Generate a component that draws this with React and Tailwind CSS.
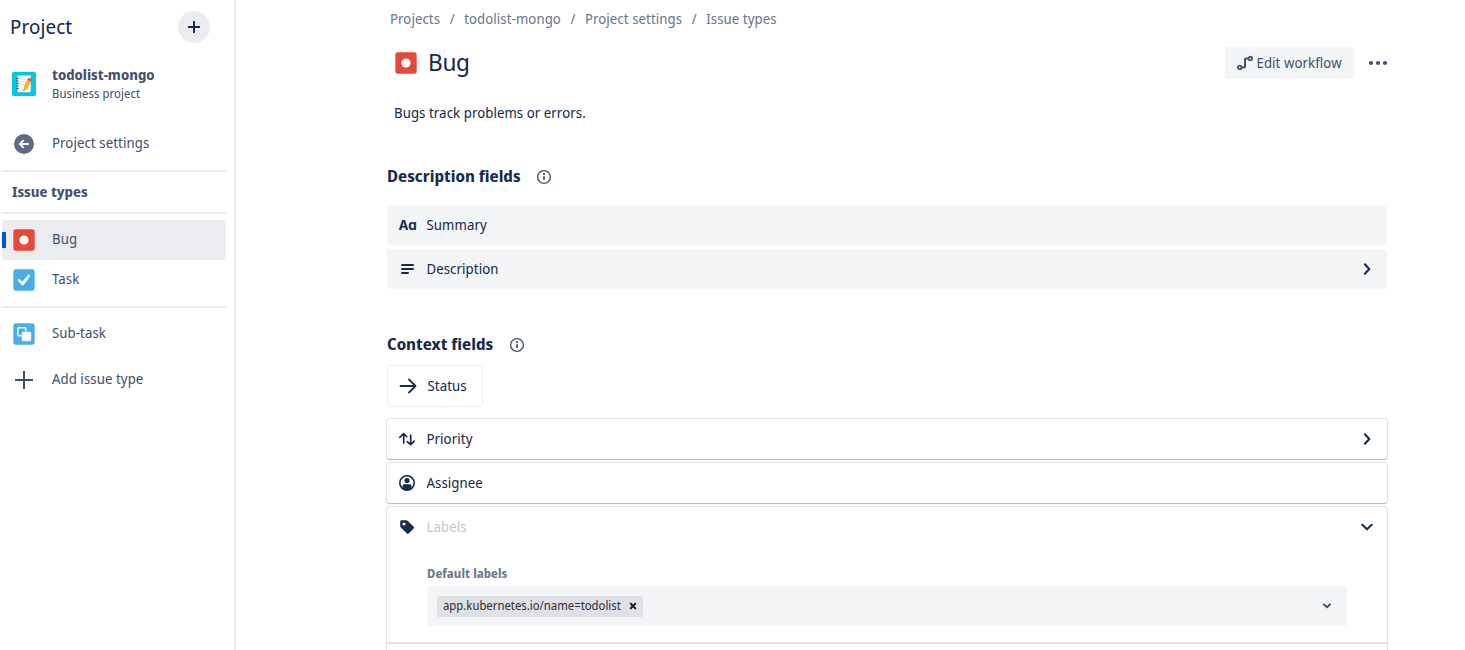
import React from 'react';

function BugIcon() {
  return (
    <svg width="24" height="24" viewBox="0 0 24 24" className="shrink-0">
      <rect x="1.3" y="1.3" width="21.4" height="21.4" rx="2.6" fill="#E5493A" />
      <circle cx="12" cy="12" r="4.6" fill="#fff" />
    </svg>
  );
}

function TaskIcon() {
  return (
    <svg width="24" height="24" viewBox="0 0 24 24" className="shrink-0">
      <rect x="1.3" y="1.3" width="21.4" height="21.4" rx="2.6" fill="#4BADE8" />
      <path d="M7.4 12.6l3.2 3.3 6.2-8" fill="none" stroke="#fff" strokeWidth="2.8" strokeLinecap="round" strokeLinejoin="round" />
    </svg>
  );
}

function SubtaskIcon() {
  return (
    <svg width="24" height="24" viewBox="0 0 24 24" className="shrink-0">
      <rect x="1.3" y="1.3" width="21.4" height="21.4" rx="2.6" fill="#4BADE8" />
      <rect x="5.8" y="5.8" width="8" height="8" rx="1" fill="none" stroke="#fff" strokeWidth="1.5" />
      <rect x="9.6" y="9.6" width="9.8" height="9.8" rx="1.6" fill="#fff" stroke="#4BADE8" strokeWidth="0.6" />
    </svg>
  );
}

function NoteAvatar() {
  return (
    <svg width="24" height="24" viewBox="0 0 24 24" className="shrink-0">
      <rect width="24" height="24" rx="2" fill="#00C7E6" />
      <path d="M5.5 3.6h13.3v15.6q0 1-1 1H6.5q-1 0-1-1z" fill="#F7F9FC" />
      <path d="M6 3.9h11" stroke="#C9D3DC" strokeWidth="0.8" />
      <path d="M8 7.4h6M8 10h5M8 12.6h4" stroke="#D5DEE6" strokeWidth="0.8" />
      <path d="M4 6.5h2.6M4 9h2.6M4 11.5h2.6M4 14h2.6M4 16.5h2.6" stroke="#31527A" strokeWidth="1" />
      <path d="M14.6 8.2l4.2 1.9-3.2 6.6-4 2.2.2-4.2z" fill="#FBB829" />
      <path d="M17.2 9.4l-4.2 7.8" stroke="#F79A22" strokeWidth="0.8" />
      <path d="M14.8 7.8l1.2-1.4q2-.8 4 .5l-1.1 3z" fill="#EF5350" />
      <path d="M11.5 19.1l.1-1.4 1.2.7z" fill="#4A4040" />
    </svg>
  );
}

function InfoIcon() {
  return (
    <svg width="16" height="16" viewBox="0 0 16 16" className="mt-0.5 shrink-0">
      <circle cx="8" cy="8" r="6.4" fill="none" stroke="#44546F" strokeWidth="1.4" />
      <path d="M8 7.2v3.8" stroke="#44546F" strokeWidth="1.8" />
      <circle cx="8" cy="5.1" r="1.1" fill="#44546F" />
    </svg>
  );
}

function Chevron({ down }) {
  return (
    <svg width="16" height="16" viewBox="0 0 16 16" className="shrink-0">
      <path
        d={down ? 'M3.3 5.8L8 10.2l4.7-4.4' : 'M5.9 3.3L10.3 8l-4.4 4.7'}
        fill="none"
        stroke="#172B4D"
        strokeWidth="2.1"
        strokeLinecap="round"
        strokeLinejoin="round"
      />
    </svg>
  );
}

function Label({ children, className = '' }) {
  return <span className={`whitespace-nowrap ${className}`}>{children}</span>;
}

function Sidebar() {
  return (
    <aside className="flex h-full w-[236px] shrink-0 flex-col border-r-2 border-[#EBECF0] pl-0.5 pr-2 text-[#42526E]">
      <header className="mt-[11px] flex h-8 items-center justify-between pl-2 pr-4">
        <Label className="text-[20px] text-[#172B4D]">Project</Label>
        <button className="flex size-8 items-center justify-center rounded-full bg-[#EBECF0]">
          <svg width="12" height="12" viewBox="0 0 12 12">
            <path d="M6 .8v10.4M.8 6h10.4" stroke="#172B4D" strokeWidth="2" strokeLinecap="round" />
          </svg>
        </button>
      </header>
      <div className="mt-[21px] flex h-10 items-center gap-4 pl-2.5">
        <NoteAvatar />
        <div className="-mt-0.5 flex flex-col">
          <Label className="text-[14px] leading-[20px] font-bold tracking-normal">todolist-mongo</Label>
          <Label className="text-[12px] leading-[17px]">Business project</Label>
        </div>
      </div>
      <div className="mt-5 flex h-10 items-center gap-4 pl-2.5">
        <svg width="24" height="24" viewBox="0 0 24 24">
          <circle cx="12" cy="12" r="10" fill="#5E6C84" />
          <path d="M16 12H8.4M11.2 8.7L7.9 12l3.3 3.3" fill="none" stroke="#fff" strokeWidth="1.9" strokeLinecap="round" strokeLinejoin="round" />
        </svg>
        <Label className="-mt-0.5">Project settings</Label>
      </div>
      <div className="mt-1.5 h-0.5 bg-[#EBECF0]" />
      <div className="flex h-10 items-center pl-2.5">
        <Label className="font-bold tracking-normal">Issue types</Label>
      </div>
      <div className="h-0.5 bg-[#EBECF0]" />
      <div className="mt-1.5 flex h-10 items-center rounded-[3px] bg-[#EBECF0]">
        <span className="h-4 w-1 rounded-r-[1px] bg-[#0052CC]" />
        <div className="flex items-center gap-4 pl-1.5">
          <BugIcon />
          <Label className="-mt-0.5">Bug</Label>
        </div>
      </div>
      <div className="flex h-10 items-center gap-4 pl-2.5">
        <TaskIcon />
        <Label className="-mt-0.5">Task</Label>
      </div>
      <div className="mt-1.5 h-0.5 bg-[#EBECF0]" />
      <div className="mt-1.5 flex h-10 items-center gap-4 pl-2.5">
        <SubtaskIcon />
        <Label className="-mt-0.5">Sub-task</Label>
      </div>
      <div className="mt-1.5 flex h-10 items-center gap-4 pl-2.5">
        <svg width="24" height="24" viewBox="0 0 24 24">
          <path d="M12 3v18M3 12h18" stroke="#42526E" strokeWidth="2" />
        </svg>
        <Label className="-mt-0.5">Add issue type</Label>
      </div>
    </aside>
  );
}

const card = 'rounded-[3px] bg-white shadow-[0_0_1px_1px_rgba(9,30,66,0.13),0_1px_1px_rgba(9,30,66,0.22)]';

export default function App() {
  return (
    <div className="flex h-[650px] w-[1465px] overflow-hidden bg-white font-['Noto_Sans_Display','Noto_Sans',sans-serif] text-[14px] leading-5 tracking-[0.07px] text-[#172B4D]">
      <Sidebar />
      <main className="flex w-[1151px] flex-col pl-[151px]">
        <nav className="mt-[9px] flex h-5 items-center pl-[3px] text-[#6B778C]">
          <Label>Projects</Label>
          <Label className="w-6 text-center">/</Label>
          <Label>todolist-mongo</Label>
          <Label className="w-6 text-center">/</Label>
          <Label>Project settings</Label>
          <Label className="w-6 text-center">/</Label>
          <Label>Issue types</Label>
        </nav>
        <div className="mt-[18px] flex h-8 items-center pl-[7px]">
          <BugIcon />
          <Label className="-mt-0.5 ml-2.5 text-[24px] tracking-[-0.3px]">Bug</Label>
          <button className="ml-auto flex h-8 w-[129px] items-center gap-[3.5px] rounded-[3px] bg-[#F4F5F7] pl-3 text-[#42526E]">
            <svg width="16" height="16" viewBox="0 0 16 16" fill="none" stroke="#42526E" className="shrink-0">
              <circle cx="2.7" cy="12.4" r="1.8" strokeWidth="1.9" />
              <circle cx="13.3" cy="3.6" r="1.8" strokeWidth="1.9" />
              <path d="M4.5 12.4H7q1 0 1-1V4.6q0-1 1-1h2.5" strokeWidth="2" />
            </svg>
            <Label>Edit workflow</Label>
          </button>
          <svg width="24" height="24" viewBox="0 0 24 24" fill="#42526E" className="ml-3 -mr-[3px]">
            <circle cx="5" cy="12" r="2.1" />
            <circle cx="12" cy="12" r="2.1" />
            <circle cx="19" cy="12" r="2.1" />
          </svg>
        </div>
        <Label className="mt-6 pl-[7px]">Bugs track problems or errors.</Label>
        <h2 className="mt-[43px] flex h-5 items-center gap-[15.5px] text-[16px] font-bold tracking-normal">
          <Label>Description fields</Label>
          <InfoIcon />
        </h2>
        <section className="mt-[19px] flex w-[1000px] flex-col gap-1">
          <div className="flex h-10 items-center rounded-[3px] bg-[#F4F5F7] pl-[11.5px]">
            <Label className="w-7 font-['Inter',sans-serif] text-[13.5px] font-bold tracking-[-0.3px]">Aɑ</Label>
            <Label>Summary</Label>
          </div>
          <div className="flex h-10 items-center rounded-[3px] bg-[#F4F5F7] pl-3 pr-3">
            <svg width="16" height="16" viewBox="0 0 16 16" className="mr-[11.5px]">
              <path d="M3 4h11M3 8h11M3 12h6" stroke="#172B4D" strokeWidth="2" strokeLinecap="round" />
            </svg>
            <Label className="flex-1">Description</Label>
            <Chevron />
          </div>
        </section>
        <h2 className="mt-[45px] flex h-5 items-center gap-4 text-[16px] font-bold tracking-normal">
          <Label>Context fields</Label>
          <InfoIcon />
        </h2>
        <div className="mt-[11px] flex h-[42px] w-24 shrink-0 items-center rounded-[3px] border border-[#EBECF0] pl-[11px]">
          <svg width="18" height="16" viewBox="0 0 18 16" className="mr-[10.5px]" fill="none" stroke="#172B4D" strokeWidth="1.8">
            <path d="M1.5 8h15M10 1.5L16.5 8 10 14.5" strokeLinecap="round" strokeLinejoin="round" />
          </svg>
          <Label>Status</Label>
        </div>
        <section className="mt-3 flex w-[1000px] flex-col gap-1">
          <div className={`flex h-10 items-center pl-3 pr-3 ${card}`}>
            <svg width="16" height="16" viewBox="0 0 16 16" className="mr-[11.5px]" fill="none" stroke="#172B4D" strokeWidth="1.7" strokeLinecap="round" strokeLinejoin="round">
              <path d="M4.7 12V3M.8 6.4l3.9-3.7 3 2.9M11.7 4.2v9.2M8.2 10.6l3.5 3.1 3.6-3.5" />
            </svg>
            <Label className="flex-1">Priority</Label>
            <Chevron />
          </div>
          <div className={`flex h-10 items-center pl-3 ${card}`}>
            <svg width="16" height="16" viewBox="0 0 16 16" className="mr-[11.5px]">
              <circle cx="8" cy="8" r="7.2" fill="none" stroke="#172B4D" strokeWidth="1.6" />
              <circle cx="8" cy="5.5" r="2.6" fill="#172B4D" />
              <path d="M3.5 14V10.8q0-1.6 1.6-1.6h5.8q1.6 0 1.6 1.6V14L8 15.5z" fill="#172B4D" />
            </svg>
            <Label>Assignee</Label>
          </div>
          <div className={`h-[200px] shrink-0 ${card}`}>
            <div className="flex h-10 items-center px-3">
              <svg width="16" height="16" viewBox="0 0 16 16" className="mr-[11.5px]">
                <path fillRule="evenodd" d="M2.5 1.2h4.7q.8 0 1.4.6l6.1 6q.9.9 0 1.8l-5 5q-.9.9-1.8 0l-6-6Q1.2 7.9 1.2 7V2.5q0-1.3 1.3-1.3zM5 3.4a1.6 1.6 0 100 3.2 1.6 1.6 0 000-3.2z" fill="#172B4D" />
              </svg>
              <Label className="flex-1 text-[#C1C7D0]">Labels</Label>
              <Chevron down />
            </div>
            <div className="flex flex-col px-10 pt-[17px]">
              <Label className="text-[12px] font-bold text-[#6B778C]">Default labels</Label>
              <div className="mt-0.5 flex h-10 items-center justify-between rounded-[3px] bg-[#F4F5F7] pl-2.5 pr-3">
                <div className="flex h-[21px] items-center rounded-[2px] bg-[#DFE1E6] pl-1.5 pr-1.5 text-[12px] tracking-normal text-[#333]">
                  <Label>app.kubernetes.io/name=todolist</Label>
                  <svg width="8" height="8" viewBox="0 0 8 8" className="ml-2">
                    <path d="M1.2 1.2l5.6 5.6M6.8 1.2L1.2 6.8" stroke="#111" strokeWidth="1.9" />
                  </svg>
                </div>
                <svg width="16" height="16" viewBox="0 0 16 16">
                  <path d="M5 6.5l3 2.8 3-2.8" fill="none" stroke="#42526E" strokeWidth="2" strokeLinecap="round" strokeLinejoin="round" />
                </svg>
              </div>
            </div>
            <div className="mt-4 h-0.5 bg-[#DFE1E6]" />
          </div>
        </section>
      </main>
    </div>
  );
}
